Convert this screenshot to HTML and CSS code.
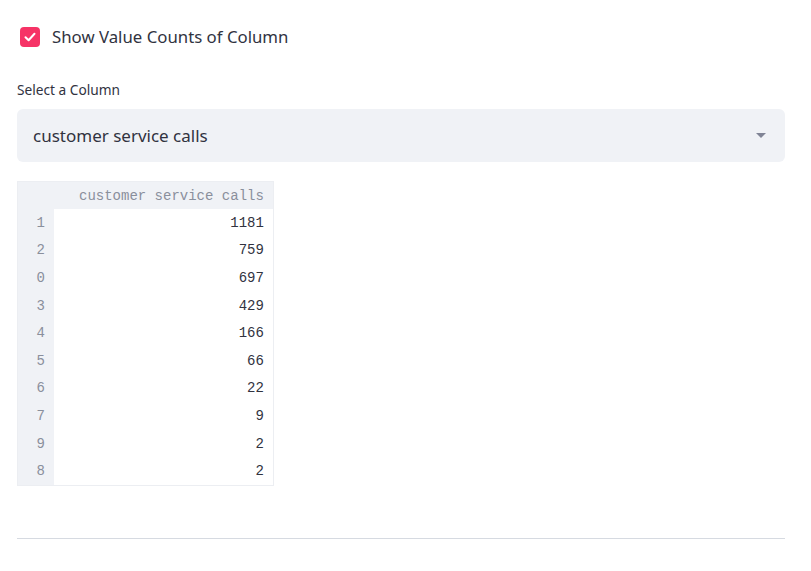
FILE: index.html
```html
<!DOCTYPE html>
<html>
<head>
<meta charset="utf-8">
<link rel="stylesheet" href="styles.css">
</head>
<body>
<div class="page">
  <label class="checkbox-row">
    <span class="box">
      <svg width="12" height="10" viewBox="0 0 12 10"><path d="M1.5 5.2 L4.6 8.2 L10.5 1.8" fill="none" stroke="#fff" stroke-width="2" stroke-linecap="round" stroke-linejoin="round"/></svg>
    </span>
    <span class="check-label">Show Value Counts of Column</span>
  </label>

  <div class="field-label">Select a Column</div>
  <div class="select">
    <span class="select-value">customer service calls</span>
    <span class="caret"></span>
  </div>

  <table class="df">
    <thead>
      <tr><th class="idx"></th><th class="col">customer service calls</th></tr>
    </thead>
    <tbody>
      <tr><td class="idx">1</td><td class="val">1181</td></tr>
      <tr><td class="idx">2</td><td class="val">759</td></tr>
      <tr><td class="idx">0</td><td class="val">697</td></tr>
      <tr><td class="idx">3</td><td class="val">429</td></tr>
      <tr><td class="idx">4</td><td class="val">166</td></tr>
      <tr><td class="idx">5</td><td class="val">66</td></tr>
      <tr><td class="idx">6</td><td class="val">22</td></tr>
      <tr><td class="idx">7</td><td class="val">9</td></tr>
      <tr><td class="idx">9</td><td class="val">2</td></tr>
      <tr><td class="idx">8</td><td class="val">2</td></tr>
    </tbody>
  </table>

  <hr class="divider">
</div>
</body>
</html>
```

FILE: styles.css
```css
html, body {
  margin: 0;
  padding: 0;
  background: #ffffff;
}
body {
  font-family: "Noto Sans", "Open Sans", sans-serif;
  color: #31333f;
}
.page {
  padding: 26px 26px 0 17px;
}
.checkbox-row {
  display: flex;
  align-items: center;
  gap: 12px;
  padding-left: 3px;
  height: 21px;
}
.box {
  width: 20px;
  height: 20px;
  border-radius: 4px;
  background: #f63366;
  display: flex;
  align-items: center;
  justify-content: center;
}
.check-label {
  font-size: 16.8px;
  color: #31333f;
}
.field-label {
  margin-top: 35px;
  font-size: 13.7px;
  line-height: 16px;
  color: #31333f;
}
.select {
  margin-top: 11px;
  height: 53px;
  background: #f0f2f6;
  border-radius: 6px;
  display: flex;
  align-items: center;
  justify-content: space-between;
  padding: 0 19px 0 16px;
}
.select-value {
  font-size: 17px;
}
.caret {
  width: 0;
  height: 0;
  border-left: 5px solid transparent;
  border-right: 5px solid transparent;
  border-top: 5px solid #808495;
}
.df {
  margin-top: 19px;
  border-collapse: collapse;
  border: 1px solid #eceef2;
  font-family: "Liberation Mono", "DejaVu Sans Mono", monospace;
  font-size: 14px;
}
.df th, .df td {
  height: 27.6px;
  padding: 0 9px;
  text-align: right;
  white-space: nowrap;
}
.df th.col, .df td.val {
  padding-left: 25px;
}
.df thead th {
  background: #f0f2f6;
  color: #8a8f9c;
  font-weight: normal;
  height: 27px;
}
.df td.idx {
  background: #f0f2f6;
  color: #8a8f9c;
  width: 18px;
}
.df td.val {
  color: #31333f;
}
.divider {
  margin: 52px 0 0 0;
  border: none;
  border-top: 1px solid #d6dae1;
  height: 0;
}
```
